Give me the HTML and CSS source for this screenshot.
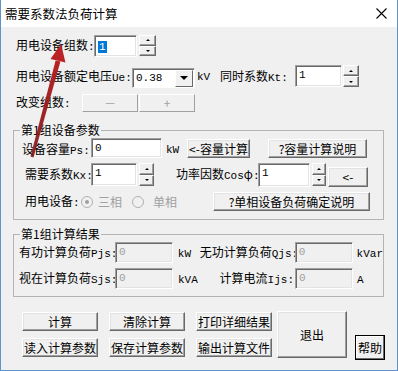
FILE: index.html
```html
<!DOCTYPE html>
<html lang="zh">
<head>
  <meta charset="UTF-8">
  <title>需要系数法负荷计算</title>
  <link rel="stylesheet" href="styles.css">
</head>
<body>

<div class="window">
  <div class="titlebar">
    <span class="title">需要系数法负荷计算</span>
    <svg class="close" width="11" height="11" viewBox="0 0 11 11">
      <path d="M0.5 0.5 L10.5 10.5 M10.5 0.5 L0.5 10.5" stroke="#000" stroke-width="1.1" fill="none"/>
    </svg>
  </div>

  <div class="content">
    <div class="row row-groups">
      <span class="lbl lbl-groups">用电设备组数<i class="en">:</i></span>
      <div class="edit edit-groups"><span class="selected en">1</span></div>
      <div class="spin spin-groups"><span class="up"></span><span class="down"></span></div>
    </div>

    <div class="row row-volt">
      <span class="lbl lbl-volt">用电设备额定电压<i class="en">Ue:</i></span>
      <div class="combo">
        <span class="combo-text en">0.38</span>
        <span class="combo-btn"><i></i></span>
      </div>
      <span class="unit unit-kv en">kV</span>
      <span class="lbl lbl-kt">同时系数<i class="en">Kt:</i></span>
      <div class="edit edit-kt en">1</div>
      <div class="spin spin-kt"><span class="up"></span><span class="down"></span></div>
    </div>

    <div class="row row-change">
      <span class="lbl lbl-change">改变组数<i class="en">:</i></span>
      <div class="btn btn-off btn-step">－</div>
      <div class="btn btn-off btn-step">+</div>
    </div>

    <!-- group 1 -->
    <fieldset class="group group-params">
      <legend>第1组设备参数</legend>
      <div class="row row-ps">
        <span class="lbl lbl-ps">设备容量<i class="en">Ps:</i></span>
        <div class="edit edit-ps en">0</div>
        <span class="unit unit-kw en">kW</span>
        <div class="btn btn-calc">&lt;-容量计算</div>
        <div class="btn btn-help1">?容量计算说明</div>
      </div>
      <div class="row row-kx">
        <span class="lbl lbl-kx">需要系数<i class="en">Kx:</i></span>
        <div class="edit edit-kx en">1</div>
        <div class="spin spin-kx"><span class="up"></span><span class="down"></span></div>
        <span class="lbl lbl-cos">功率因数<i class="en">Cos</i>φ<i class="en">:</i></span>
        <div class="edit edit-cos en">1</div>
        <div class="spin spin-cos"><span class="up"></span><span class="down"></span></div>
        <div class="btn btn-back">&lt;-</div>
      </div>
      <div class="row row-phase">
        <span class="lbl lbl-phase">用电设备<i class="en">:</i></span>
        <span class="radio checked"></span>
        <span class="radio-text">三相</span>
        <span class="radio radio-2"></span>
        <span class="radio-text">单相</span>
        <div class="btn btn-help2">?单相设备负荷确定说明</div>
      </div>
    </fieldset>

    <!-- group 2 -->
    <fieldset class="group group-result">
      <legend>第1组计算结果</legend>
      <div class="row row-res">
        <span class="lbl lbl-res">有功计算负荷<i class="en">Pjs:</i></span>
        <div class="edit edit-res en">0</div>
        <span class="unit unit-res en">kW</span>
        <span class="lbl lbl-res2">无功计算负荷<i class="en">Qjs:</i></span>
        <div class="edit edit-res en">0</div>
        <span class="unit unit-res2 en">kVar</span>
      </div>
      <div class="row row-res row-res-b">
        <span class="lbl lbl-res">视在计算负荷<i class="en">Sjs:</i></span>
        <div class="edit edit-res en">0</div>
        <span class="unit unit-res en">kVA</span>
        <span class="lbl lbl-res2">计算电流<i class="en">Ijs:</i></span>
        <div class="edit edit-res en">0</div>
        <span class="unit unit-res2 en">A</span>
      </div>
    </fieldset>

    <div class="actions">
      <div class="action-grid">
        <div class="btn">计算</div>
        <div class="btn">清除计算</div>
        <div class="btn">打印详细结果</div>
        <div class="btn">读入计算参数</div>
        <div class="btn">保存计算参数</div>
        <div class="btn">输出计算文件</div>
      </div>
      <div class="btn btn-exit">退出</div>
      <div class="btn btn-help">帮助</div>
    </div>
  </div>

  <!-- red annotation arrow -->
  <svg class="arrow" width="80" height="170" viewBox="0 0 80 170">
    <defs>
      <linearGradient id="arrowFill" x1="0" y1="1" x2="0" y2="0">
        <stop offset="0" stop-color="#7e1214" stop-opacity="0.9"/>
        <stop offset="1" stop-color="#b82224"/>
      </linearGradient>
    </defs>
    <polygon points="54.6,60.4 59.4,61.6 32.5,157.4 29.5,156.6" fill="url(#arrowFill)"/>
    <polygon points="60,44 64.5,62.5 49.5,59" fill="#bb2426"/>
  </svg>
</div>

</body>
</html>
```

FILE: styles.css
```css
*{
margin: 0;
padding: 0;
box-sizing: border-box;
}

body{
background: #f0f0f0;
font-family: "Noto Sans CJK SC", "Liberation Sans", sans-serif;
font-size: 12px;
line-height: 14px;
color: #000;
}

/* latin parts look like the old monospaced system font */
.en{
font-family: "Liberation Mono", "Noto Sans CJK SC", monospace;
font-size: 11px;
font-style: normal;
}

.window{
position: relative;
width: 398px;
height: 371px;
background: #f0f0f0;
border: 1px solid #5f93cc;
border-top: none;
overflow: hidden;
}

.titlebar{
height: 27px;
background: #fff;
display: flex;
align-items: center;
justify-content: space-between;
padding: 0 10px 0 4px;
}

.title{
font-size: 12.5px;
}

.content{
padding: 8px 0 0 15px;
}

.row{
display: flex;
align-items: center;
}

.lbl, .unit, .radio-text{
white-space: nowrap;
}

/* sunken edit box */
.edit{
background: #fff;
border: 1px solid;
border-color: #a0a0a0 #fff #fff #a0a0a0;
box-shadow: inset 1px 1px #696969, inset -1px -1px #e3e3e3;
padding: 2px 3px;
align-self: flex-start;
}

.selected{
background: #0078d7;
color: #fff;
padding: 0 1px;
}

/* raised button */
.btn{
display: flex;
align-items: center;
justify-content: center;
background: #f0f0f0;
border: 1px solid;
border-color: #fff #696969 #696969 #fff;
box-shadow: inset -1px -1px #a0a0a0, inset 1px 1px #e3e3e3;
white-space: nowrap;
}

.btn-off{
color: #a0a0a0;
border-color: #fff #a0a0a0 #a0a0a0 #fff;
box-shadow: none;
}

.spin{
display: flex;
flex-direction: column;
align-self: flex-start;
}

.spin span{
flex: 1;
display: flex;
align-items: center;
justify-content: center;
background: #f0f0f0;
border: 1px solid;
border-color: #fff #696969 #696969 #fff;
box-shadow: inset -1px -1px #a0a0a0;
}

.spin .up::after{
content: "";
border-left: 2px solid transparent;
border-right: 2px solid transparent;
border-bottom: 2px solid #000;
}

.spin .down::after{
content: "";
border-left: 2px solid transparent;
border-right: 2px solid transparent;
border-top: 2px solid #000;
}

/* row 1 */
.row-groups{
height: 22px;
}
.lbl-groups{
width: 78px;
}
.edit-groups{
width: 43px;
height: 22px;
}
.spin-groups{
width: 17px;
height: 21px;
margin-left: 2px;
}

/* row 2 */
.row-volt{
height: 23px;
margin-top: 8px;
}
.lbl-volt{
width: 116px;
}
.combo{
width: 63px;
height: 20px;
display: flex;
align-items: center;
justify-content: space-between;
background: #fff;
border: 1px solid;
border-color: #a0a0a0 #fff #fff #a0a0a0;
box-shadow: inset 1px 1px #696969;
padding: 1px 1px 1px 3px;
margin-top: 3px;
}
.combo-btn{
width: 18px;
height: 17px;
display: flex;
align-items: center;
justify-content: center;
background: #f0f0f0;
border: 1px solid;
border-color: #fff #696969 #696969 #fff;
}
.combo-btn i{
border-left: 4px solid transparent;
border-right: 4px solid transparent;
border-top: 4px solid #000;
}
.unit-kv{
width: 23px;
margin-left: 2px;
}
.lbl-kt{
width: 75px;
}
.edit-kt{
width: 47px;
height: 22px;
}
.spin-kt{
width: 16px;
height: 22px;
margin-left: 1px;
}

/* row 3 */
.row-change{
height: 18px;
margin-top: 6px;
}
.lbl-change{
width: 66px;
}
.btn-step{
width: 56px;
height: 18px;
margin-right: 1px;
}

/* group boxes */
.group{
width: 371px;
margin-left: -3px;
border: 1px solid #b4b4b4;
padding: 0 0 8px 0;
min-width: 0;
}
.group legend{
margin-left: 6px;
padding: 0 1px;
line-height: 14px;
}
.group-params{
margin-top: 11px;
}
.group-result{
margin-top: 7px;
padding-bottom: 7px;
}

.row-ps{
height: 21px;
margin-top: 1px;
padding-left: 8px;
align-items: flex-start;
}
.lbl-ps{
width: 69px;
margin-top: 4px;
}
.edit-ps{
width: 71px;
height: 20px;
}
.unit-kw{
width: 21px;
margin: 5px 0 0 4px;
}
.btn-calc{
width: 63px;
height: 19px;
margin-top: 1px;
}
.btn-help1{
width: 99px;
height: 19px;
margin: 1px 0 0 18px;
}

.row-kx{
height: 24px;
margin-top: 4px;
padding-left: 11px;
}
.lbl-kx{
width: 66px;
}
.edit-kx{
width: 46px;
height: 23px;
}
.spin-kx{
width: 15px;
height: 23px;
margin-left: 2px;
}
.lbl-cos{
width: 82px;
margin-left: 22px;
}
.edit-cos{
width: 52px;
height: 24px;
}
.spin-cos{
width: 14px;
height: 23px;
margin-left: 2px;
}
.btn-back{
width: 40px;
height: 20px;
margin-left: 2px;
align-self: flex-end;
}

.row-phase{
height: 19px;
margin-top: 5px;
padding-left: 11px;
}
.lbl-phase{
width: 56px;
}
.radio{
width: 12px;
height: 12px;
border-radius: 50%;
border: 1px solid #b0b0b0;
background: #f0f0f0;
display: flex;
align-items: center;
justify-content: center;
}
.radio.checked::after{
content: "";
width: 4px;
height: 4px;
border-radius: 50%;
background: #a0a0a0;
}
.radio-2{
margin-left: 10px;
}
.radio-text{
color: #a0a0a0;
margin-left: 5px;
width: 24px;
}
.radio-2 + .radio-text{
margin-left: 9px;
}
.btn-help2{
width: 157px;
height: 19px;
margin-left: 36px;
}

.row-res{
height: 21px;
margin-top: 1px;
padding-left: 5px;
}
.row-res-b{
margin-top: 5px;
}
.lbl-res{
width: 96px;
}
.edit-res{
width: 58px;
height: 21px;
background: #f0f0f0;
color: #a0a0a0;
}
.unit-res{
width: 22px;
margin: 3px 0 0 5px;
}
.lbl-res2{
width: 95px;
text-align: right;
padding-right: 1px;
}
.unit-res2{
margin: 3px 0 0 4px;
}

/* bottom buttons */
.actions{
display: flex;
margin: 14px 0 0 6px;
}
.action-grid{
display: grid;
grid-template-columns: 76px 76px 76px;
grid-auto-rows: 19px;
column-gap: 11px;
row-gap: 7px;
margin-top: 1px;
}
.btn-exit{
width: 70px;
height: 47px;
margin-left: 5px;
}
.btn-help{
width: 30px;
height: 25px;
margin: 0 0 -2px 8px;
align-self: flex-end;
border-color: #000;
box-shadow: inset -1px -1px #696969, inset 1px 1px #fff;
}

.arrow{
position: absolute;
left: 0;
top: 0;
pointer-events: none;
}
```
